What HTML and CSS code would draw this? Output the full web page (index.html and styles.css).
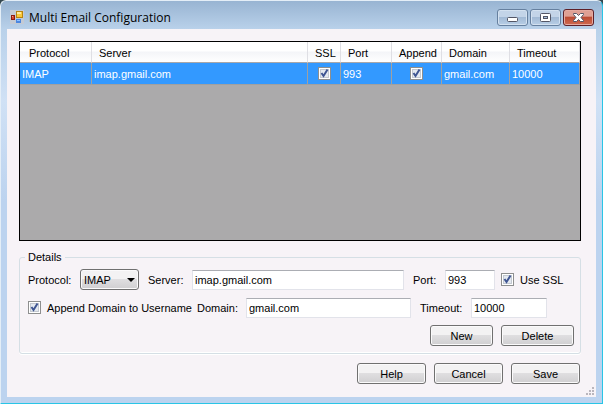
FILE: index.html
```html
<!DOCTYPE html>
<html lang="en">
<head>
<meta charset="utf-8">
<title>Multi Email Configuration</title>
<link rel="stylesheet" href="styles.css">
</head>
<body>
<div class="window">
  <header class="titlebar">
    <svg class="app-icon" width="14" height="14" viewBox="0 0 14 14" aria-hidden="true">
      <rect width="14" height="14" fill="#c4cad4"/>
      <rect x="1.500" y="5.500" width="3" height="4" fill="#d9452c" stroke="#8c1c10"/>
      <rect x="2" y="6" width="1" height="1" fill="#f7a48c"/>
      <rect x="6.500" y="1.500" width="6" height="6" fill="#fbc83a" stroke="#b88410"/>
      <rect x="7" y="2" width="4" height="2" fill="#ffeb9c"/>
      <rect x="6" y="9" width="5" height="4" fill="#4a86e0"/>
      <rect x="7" y="10" width="3" height="1" fill="#8fc0ff"/>
    </svg>
    <h1 class="title">Multi Email Configuration</h1>
    <div class="window-buttons">
      <button type="button" class="window-button" aria-label="Minimize">
        <svg width="13" height="11" viewBox="0 0 13 11"><rect x="1.500" y="5.500" width="10" height="4" rx="1" fill="#fff" stroke="#535666"/></svg>
      </button>
      <button type="button" class="window-button" aria-label="Maximize">
        <svg width="13" height="11" viewBox="0 0 13 11"><rect x="1.500" y="1.500" width="10" height="8" rx="1" fill="#fff" stroke="#535666"/><rect x="4.500" y="4.500" width="4" height="2" fill="#a9c0dc" stroke="#535666"/></svg>
      </button>
      <button type="button" class="window-button close" aria-label="Close">
        <svg width="13" height="11" viewBox="0 0 13 11"><path d="M1.500 1.500H4.500L6.500 3.500L8.500 1.500H11.500V2.500L9 5.500L11.500 8.500V9.500H8.500L6.500 7.500L4.500 9.500H1.500V8.500L4 5.500L1.500 2.500Z" fill="#fff" stroke="#535666" stroke-linejoin="round"/></svg>
      </button>
    </div>
  </header>

  <main class="client">
    <div class="grid">
      <table class="accounts">
        <colgroup>
          <col class="col-protocol"><col><col class="col-ssl"><col class="col-port"><col class="col-append"><col class="col-domain"><col class="col-timeout">
        </colgroup>
        <thead>
          <tr><th>Protocol</th><th>Server</th><th>SSL</th><th>Port</th><th>Append</th><th>Domain</th><th>Timeout</th></tr>
        </thead>
        <tbody>
          <tr>
            <td>IMAP</td>
            <td>imap.gmail.com</td>
            <td class="tick"><input type="checkbox" class="check" aria-label="SSL" checked></td>
            <td>993</td>
            <td class="tick"><input type="checkbox" class="check" aria-label="Append" checked></td>
            <td>gmail.com</td>
            <td>10000</td>
          </tr>
        </tbody>
      </table>
    </div>

    <fieldset class="details">
      <legend>Details</legend>
      <div class="row">
        <label class="label-protocol" for="protocol">Protocol:</label>
        <span class="select-box">
          <select id="protocol"><option>IMAP</option></select>
          <svg class="arrow" width="8" height="4" viewBox="0 0 8 4" aria-hidden="true"><path d="M0 0H8L4 4Z"/></svg>
        </span>
        <label class="label-server" for="server">Server:</label>
        <input class="field grow" id="server" type="text" value="imap.gmail.com">
        <label class="label-port" for="port">Port:</label>
        <input class="field field-port" id="port" type="text" value="993">
        <input type="checkbox" class="check" id="ssl" checked>
        <label class="label-ssl" for="ssl">Use SSL</label>
      </div>
      <div class="row row-domain">
        <input type="checkbox" class="check" id="append" checked>
        <label class="label-append" for="append">Append Domain to Username</label>
        <label class="label-domain" for="domain">Domain:</label>
        <input class="field grow" id="domain" type="text" value="gmail.com">
        <label class="label-timeout" for="timeout">Timeout:</label>
        <input class="field field-timeout" id="timeout" type="text" value="10000">
      </div>
      <div class="actions">
        <button type="button" class="button button-new">New</button>
        <button type="button" class="button button-delete">Delete</button>
      </div>
    </fieldset>

    <div class="actions footer">
      <button type="button" class="button">Help</button>
      <button type="button" class="button">Cancel</button>
      <button type="button" class="button">Save</button>
    </div>
    <svg class="grip" width="8" height="8" viewBox="0 0 8 8" aria-hidden="true"><path fill="#b9b6bd" d="M6 0h2v2H6zM3 3h2v2H3zM6 3h2v2H6zM0 6h2v2H0zM3 6h2v2H3zM6 6h2v2H6z"/></svg>
  </main>
</div>
</body>
</html>
```
FILE: styles.css
```css
* {
  box-sizing: border-box;
}

body {
  margin: 0;
  background: #33474f;
  color: #000;
  font: 11px/14px "Liberation Sans", Arial, sans-serif;
}

button,
input,
select {
  margin: 0;
  color: inherit;
  font: inherit;
}

.window {
  display: flex;
  flex-direction: column;
  min-height: 100vh;
  padding: 0 6px 6px;
  border: 1px solid #29c5e6;
  border-top-color: #e4eef7;
  border-left-color: #e4eef7;
  border-radius: 6px 6px 0 0;
  background: linear-gradient(#98b4d2 0, #b9d1ea 28px, #d0e1f5 100px, #bcd3ef 200px);
}

.titlebar {
  display: flex;
  align-items: flex-start;
  height: 28px;
  padding: 8px 0 0 3px;
}

.app-icon {
  margin-top: 1px;
}

.title {
  flex: 1;
  margin: 1px 0 0 5px;
  font: 12px/16px "Open Sans", "Noto Sans", sans-serif;
}

.window-buttons {
  display: flex;
  gap: 2px;
  margin-right: 2px;
}

.window-button {
  display: flex;
  align-items: center;
  justify-content: center;
  width: 31px;
  height: 17px;
  padding: 0;
  border: 1px solid #66809f;
  border-radius: 3px;
  background: linear-gradient(#c3d4e8 0 45%, #a2bad5 50%, #b8cee6);
  box-shadow: inset 0 0 0 1px #d3e1f0;
}

.window-button.close {
  border-color: #5e2028;
  background: linear-gradient(#dfa094 0 40%, #bd4c34 50%, #cf6a50);
  box-shadow: inset 0 0 0 1px #e5aaa0;
}

.client {
  position: relative;
  display: flex;
  flex: 1;
  flex-direction: column;
  padding: 12px 15px 13px 12px;
  background: #f7f3f7;
}

.grid {
  flex: 1;
  border: 1px solid #000;
  background: #abaaab;
}

.accounts {
  width: 100%;
  border-collapse: separate;
  border-spacing: 0;
  table-layout: fixed;
}

.col-protocol { width: 72px; }
.col-ssl { width: 33px; }
.col-port { width: 51px; }
.col-append { width: 50px; }
.col-domain { width: 68px; }
.col-timeout { width: 70px; }

.accounts th {
  height: 21px;
  padding: 2px 0 0 7px;
  border-right: 1px solid #dfdfe4;
  border-bottom: 1px solid #a8a7a9;
  background: linear-gradient(#fff 0 45%, #f4f5f8 50%, #fff);
  font-weight: normal;
  text-align: left;
  white-space: nowrap;
}

.accounts th:first-child {
  padding-left: 9px;
}

.accounts td {
  height: 22px;
  padding: 0 0 0 2px;
  border-right: 1px solid #a0a0a0;
  border-bottom: 1px solid #a0a0a0;
  background: #3399ff;
  color: #fff;
}

.accounts .tick {
  padding: 0;
  text-align: center;
}

.check {
  flex: none;
  width: 13px;
  height: 13px;
  border: 1px solid #8e8f8f;
  appearance: none;
  background: url("data:image/svg+xml,%3Csvg xmlns='http://www.w3.org/2000/svg' viewBox='0 0 11 11'%3E%3Crect x='1.500' y='1.500' width='8' height='8' fill='%23e4e9f0' stroke='%23c3c8d0'/%3E%3Cpath d='M2.500 5L4.500 8L8.500 1.500' fill='none' stroke='%233f5592' stroke-width='2'/%3E%3C/svg%3E") center / 11px 11px #fff;
}

.accounts .check {
  display: block;
  margin: 0 auto;
}

.details {
  min-width: 0;
  margin: 9px 0 0;
  padding: 0 6px 7px 8px;
  border: 1px solid #d5dfe5;
  border-radius: 3px;
  box-shadow: inset 0 -1px #fff, 0 1px #fff;
}

.details legend {
  margin-left: -3px;
  padding: 0 3px;
}

.row {
  display: flex;
  align-items: center;
  height: 21px;
  margin-top: 5px;
  white-space: nowrap;
}

.row-domain {
  margin: 7px 27px 0 0;
}

.label-protocol { width: 52px; }
.label-server { width: 53px; padding-left: 9px; }
.label-port { width: 41px; padding-left: 9px; }
.label-ssl { width: 60px; padding-left: 6px; }
.label-append { width: 150px; padding-left: 6px; }
.label-domain { width: 55px; padding-left: 6px; }
.label-timeout { width: 60px; padding-left: 9px; }

.field {
  height: 20px;
  padding: 0 2px;
  border: 1px solid #e2e3ea;
  border-top-color: #abadb3;
  background: #fff;
}

.grow {
  flex: 1;
  min-width: 0;
}

.field-port {
  width: 50px;
  margin-right: 6px;
}

.field-timeout {
  width: 76px;
}

.select-box {
  position: relative;
  width: 59px;
  height: 21px;
}

.select-box select,
.button {
  border: 1px solid #707070;
  border-radius: 3px;
  background: linear-gradient(#f3f2f3 0 45%, #dfdee0 50%, #d0cfd1);
  box-shadow: inset 0 0 0 1px #fbfafb;
}

.select-box select {
  width: 100%;
  height: 100%;
  padding: 0 3px;
  appearance: none;
}

.arrow {
  position: absolute;
  top: 9px;
  right: 4px;
  pointer-events: none;
}

.actions {
  display: flex;
  justify-content: flex-end;
  gap: 8px;
  margin-top: 7px;
}

.button {
  width: 69px;
  height: 21px;
  padding: 0;
}

.button-new { width: 63px; }
.button-delete { width: 73px; }

.footer {
  margin-top: 9px;
  padding-right: 1px;
}

.grip {
  position: absolute;
  right: 2px;
  bottom: 2px;
}
```
